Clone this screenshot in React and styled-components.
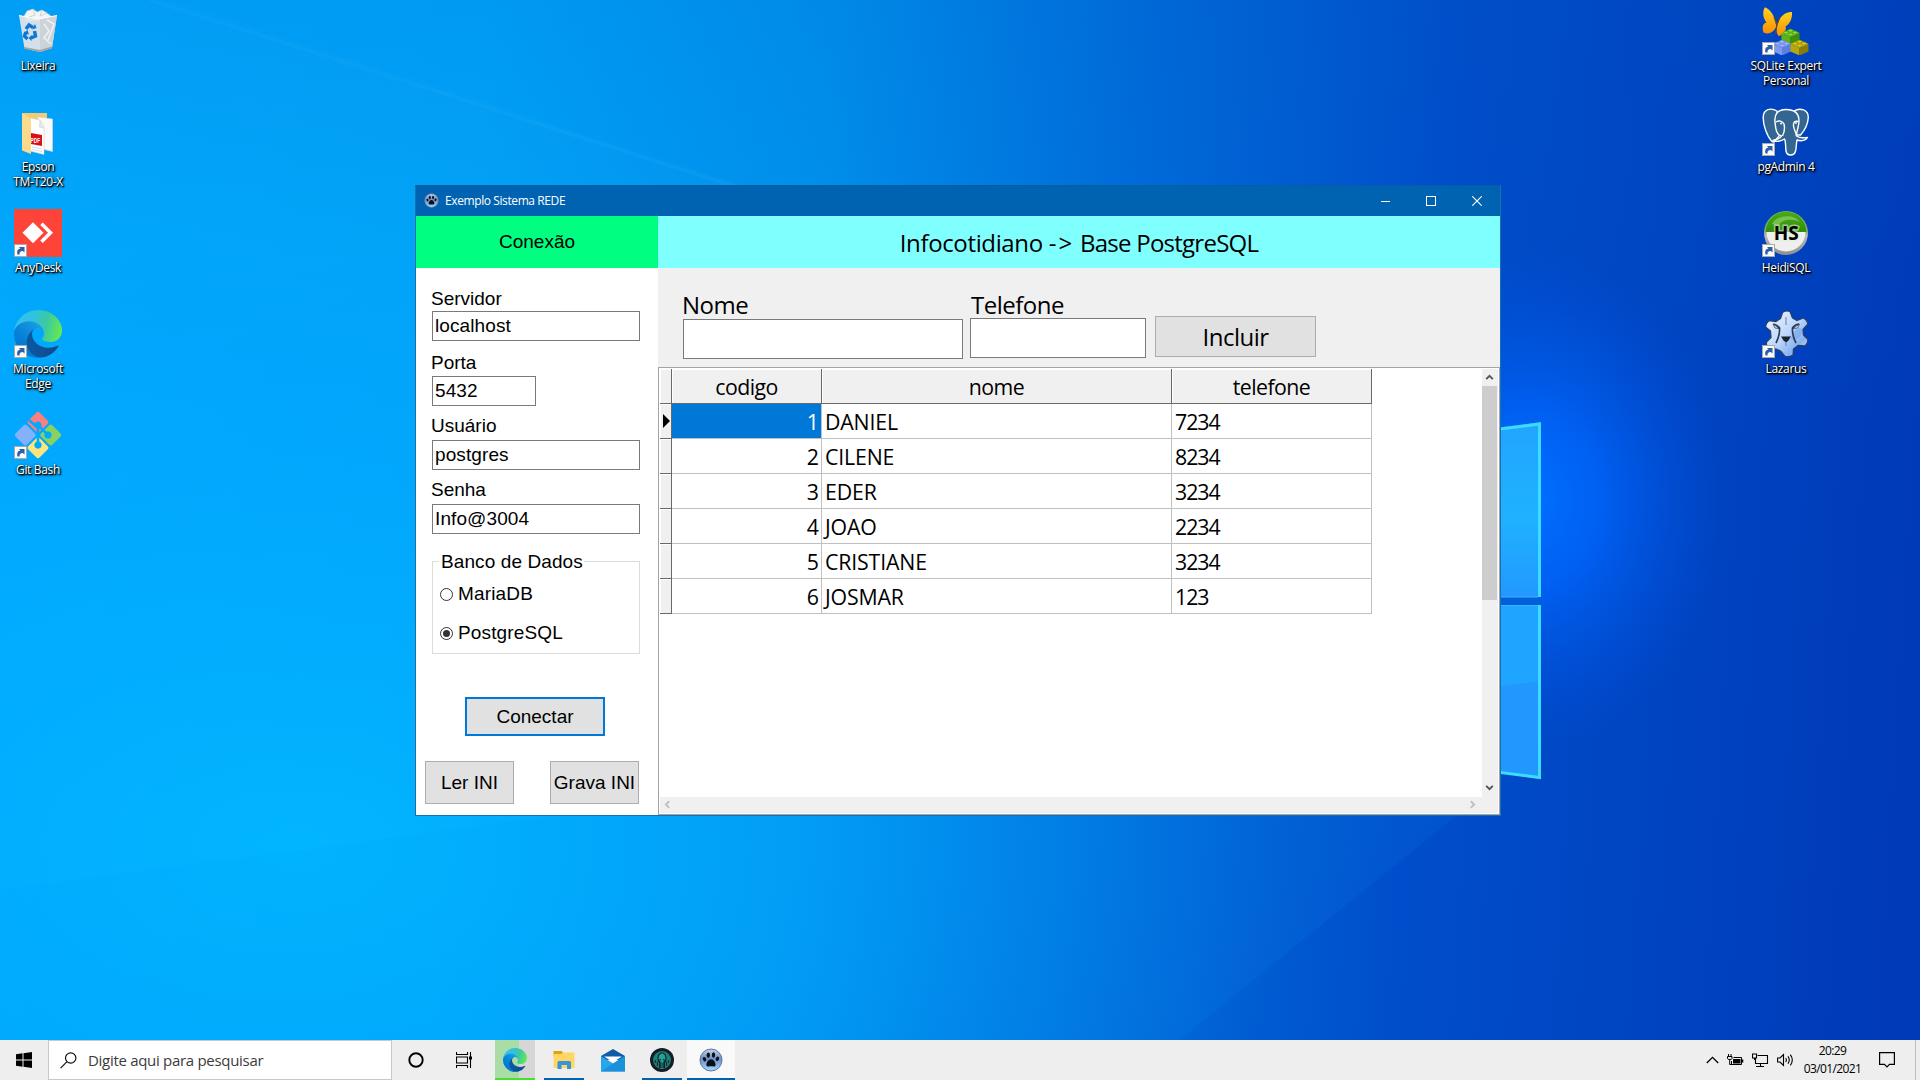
import React from "react";
import styled, { createGlobalStyle } from "styled-components";

const SEGOE = '"Open Sans", "Noto Sans", sans-serif';
const ARIAL = '"Liberation Sans", Arial, sans-serif';

const GlobalStyle = createGlobalStyle`
  *, *::before, *::after { box-sizing: border-box; }
  body { margin: 0; overflow: hidden; }
  svg { display: block; flex: none; }
`;

/* ---------- desktop ---------- */

const Screen = styled.div`
  position: relative;
  display: flex;
  flex-direction: column;
  width: 1920px;
  height: 1080px;
  overflow: hidden;
  font-family: ${SEGOE};
  background: #0078e0;
`;

const Wallpaper = styled.svg`
  position: absolute;
  left: 0;
  top: 0;
`;

const Desktop = styled.main`
  position: relative;
  flex: 1;
  display: flex;
  justify-content: space-between;
  padding-right: 96px;
`;

const IconColumn = styled.div`
  display: flex;
  flex-direction: column;
  width: 76px;
`;

const Shortcut = styled.div`
  height: 101px;
  padding-top: 7px;
  display: flex;
  flex-direction: column;
  align-items: center;
  gap: 3px;
`;

const ShortcutLabel = styled.span`
  color: #fff;
  font-size: 12px;
  line-height: 15px;
  letter-spacing: -0.35px;
  text-align: center;
  white-space: pre;
  text-shadow: 1px 1px 1px #000, 1px 1px 2px #000, 0 1px 3px rgba(0, 0, 0, 0.9);
`;

/* ---------- application window ---------- */

const Window = styled.section`
  position: absolute;
  left: 415px;
  top: 185px;
  width: 1086px;
  height: 631px;
  border: 1px solid #1c6fae;
  border-top-color: #0a5ca0;
  display: flex;
  flex-direction: column;
  background: #fff;
  color: #000;
`;

const TitleBar = styled.header`
  flex: none;
  height: 30px;
  display: flex;
  align-items: center;
  padding: 0 0 1px 8px;
  background: #0063b1;
  color: #fff;
`;

const TitleText = styled.h1`
  flex: 1;
  margin: 0 0 0 6px;
  font-size: 12px;
  font-weight: 400;
  line-height: 30px;
  height: 29px;
  letter-spacing: -0.4px;
`;

const CaptionButton = styled.span`
  width: 46px;
  height: 29px;
  display: flex;
  align-items: center;
  justify-content: center;
`;

const Body = styled.div`
  flex: 1;
  display: flex;
  min-height: 0;
`;

const ConnectionPanel = styled.aside`
  width: 242px;
  flex: none;
  display: flex;
  flex-direction: column;
  font-family: ${ARIAL};
  font-size: 19px;
  line-height: 22px;
`;

const ConnectionTitle = styled.div`
  height: 52px;
  line-height: 51px;
  text-align: center;
  background: #00ff80;
`;

const ConnectionForm = styled.div`
  flex: 1;
  display: flex;
  flex-direction: column;
  padding: 20px 18px 0 16px;
`;

const FieldLabel = styled.label`
  height: ${(p) => p.$h}px;
  margin-left: -1px;
`;

const TextField = styled.div`
  width: ${(p) => p.$w}px;
  height: 30px;
  margin-bottom: ${(p) => p.$after}px;
  padding-left: 2px;
  border: 1px solid #7a7a7a;
  background: #fff;
  line-height: 27px;
  letter-spacing: 0.1px;
`;

const Group = styled.div`
  height: 93px;
  width: 208px;
  margin-top: 27px;
  border: 1px solid #dcdcdc;
  display: flex;
  flex-direction: column;
  align-items: flex-start;
`;

const GroupCaption = styled.span`
  flex: none;
  height: 22px;
  margin: -12px 0 11px 6px;
  padding: 1px 1px 0 2px;
  background: #fff;
  letter-spacing: 0.1px;
`;

const Option = styled.div`
  height: 22px;
  margin: 0 0 17px 7px;
  display: flex;
  align-items: center;
  gap: 5px;
  letter-spacing: 0.15px;
`;

const Radio = styled.span`
  width: 13px;
  height: 13px;
  padding: 2px;
  border: 1px solid #333;
  border-radius: 50%;
  background: ${(p) => (p.$on ? "#333" : "#fff")};
  background-clip: content-box;
`;

const Button = styled.button`
  width: ${(p) => p.$w}px;
  height: ${(p) => p.$h}px;
  flex: none;
  padding: 0;
  border: ${(p) => (p.$focused ? "2px solid #0078d7" : "1px solid #adadad")};
  background: #e1e1e1;
  color: #000;
  font: inherit;
  white-space: nowrap;
  letter-spacing: inherit;
`;

const ConnectRow = styled.div`
  padding: 43px 0 25px 33px;
  display: flex;
`;

const IniRow = styled.div`
  display: flex;
  gap: 36px;
  margin-left: -7px;
`;

const Content = styled.div`
  flex: 1;
  display: flex;
  flex-direction: column;
  min-width: 0;
`;

const ContentTitle = styled.div`
  height: 52px;
  flex: none;
  background: #80ffff;
  text-align: center;
  font-size: 24px;
  line-height: 53px;
  letter-spacing: -0.36px;
`;

const TitlePart = styled.span`
  letter-spacing: ${(p) => p.$ls}px;
`;

const InsertBar = styled.div`
  height: 99px;
  flex: none;
  display: flex;
  align-items: flex-start;
  padding: 20px 0 0 25px;
  background: #f0f0f0;
  font-size: 24px;
  letter-spacing: -0.5px;
`;

const InsertField = styled.div`
  width: ${(p) => p.$w}px;
  margin-right: ${(p) => p.$gap}px;
  display: flex;
  flex-direction: column;
`;

const InsertLabel = styled.label`
  height: ${(p) => p.$h}px;
  line-height: 34px;
  margin-left: ${(p) => p.$shift}px;
`;

const InsertInput = styled.div`
  height: 40px;
  border: 1px solid #7a7a7a;
  background: #fff;
`;

const InsertAction = styled.div`
  padding-top: 28px;
`;

const GridFrame = styled.div`
  flex: 1;
  display: flex;
  flex-direction: column;
  border: 1px solid #a3a3a8;
  padding: 1px;
  min-height: 0;
`;

const GridArea = styled.div`
  flex: 1;
  display: flex;
  min-height: 0;
`;

const Table = styled.div`
  flex: 1;
  display: flex;
  flex-direction: column;
  font-size: 21.3px;
  line-height: 36px;
`;

const Row = styled.div`
  display: grid;
  grid-template-columns: 12px 150px 350px 200px;
  grid-template-rows: 35px;
  height: 35px;
`;

const Indicator = styled.span`
  display: flex;
  align-items: center;
  padding: 0 0 1px 2px;
  background: #f0f0f0;
  box-shadow: inset 1px 1px 0 #fff;
  border-right: 1px solid #696969;
  border-bottom: 1px solid #696969;
`;

const HeaderCell = styled.span`
  height: 35px;
  background: #f0f0f0;
  box-shadow: inset 1px 1px 0 #fff;
  border-right: 1px solid #696969;
  border-bottom: 1px solid #696969;
  text-align: center;
  letter-spacing: -0.55px;
`;

const Cell = styled.span`
  height: 35px;
  padding: 0 ${(p) => (p.$right ? 2 : 0)}px 0 ${(p) => (p.$right ? 0 : 3)}px;
  border-right: 1px solid #c0c0c0;
  border-bottom: 1px solid #c0c0c0;
  text-align: ${(p) => (p.$right ? "right" : "left")};
  background: ${(p) => (p.$selected ? "#0078d7" : "#fff")};
  color: ${(p) => (p.$selected ? "#fff" : "#000")};
  letter-spacing: ${(p) => (p.$digits ? -1 : p.$right ? 0 : -0.15)}px;
`;

const VerticalBar = styled.div`
  width: 16px;
  display: flex;
  flex-direction: column;
  background: #f0f0f0;
`;

const ScrollArrow = styled.span`
  width: 15px;
  height: ${(p) => p.$h}px;
  display: flex;
  align-items: center;
  justify-content: center;
`;

const Thumb = styled.span`
  width: 15px;
  height: 214px;
  background: #cdcdcd;
`;

const Track = styled.span`
  flex: 1;
`;

const HorizontalBar = styled.div`
  height: 16px;
  flex: none;
  display: flex;
  padding-right: 18px;
  justify-content: space-between;
  background: #f0f0f0;
`;

/* ---------- taskbar ---------- */

const Taskbar = styled.footer`
  position: relative;
  flex: none;
  height: 40px;
  display: flex;
  background: #eee;
  color: #000;
`;

const TaskButton = styled.span`
  width: ${(p) => p.$w || 48}px;
  margin-left: ${(p) => p.$gap || 0}px;
  height: 40px;
  display: flex;
  align-items: center;
  justify-content: center;
  background: ${(p) => p.$bg || "transparent"};
  border-bottom: 2px solid ${(p) => p.$line || "transparent"};
  border-top: 2px solid transparent;
`;

const SearchBox = styled.div`
  width: 344px;
  height: 40px;
  padding-left: 11px;
  display: flex;
  align-items: center;
  gap: 11px;
  border: 1px solid #c8c8c8;
  background: #fff;
  color: #3b3b3b;
  font-size: 15px;
  letter-spacing: -0.3px;
`;

const Spacer = styled.span`
  flex: 1;
`;

const Tray = styled.div`
  display: flex;
  align-items: center;
  gap: 8px;
  padding-right: 20px;
`;

const Clock = styled.time`
  width: 61px;
  margin-right: 8px;
  display: flex;
  flex-direction: column;
  font-size: 12px;
  line-height: 18px;
  letter-spacing: -0.6px;
  text-align: center;
`;

const ShowDesktop = styled.span`
  width: 5px;
  border-left: 1px solid #bcbcbc;
`;

/* ---------- drawings ---------- */

function WallpaperArt() {
  return (
    <Wallpaper width="1920" height="1080" viewBox="0 0 1920 1080">
      <defs>
        <linearGradient id="wBase" gradientUnits="userSpaceOnUse" x1="0" y1="440" x2="1920" y2="560">
          <stop offset="0" stopColor="#00acff" />
          <stop offset="0.24" stopColor="#00a8fb" />
          <stop offset="0.42" stopColor="#0094ee" />
          <stop offset="0.58" stopColor="#006edb" />
          <stop offset="0.74" stopColor="#004ecb" />
          <stop offset="1" stopColor="#003ab8" />
        </linearGradient>
        <radialGradient id="wLow" gradientUnits="userSpaceOnUse" cx="300" cy="850" r="1000" gradientTransform="translate(0 340) scale(1 .6)">
          <stop offset="0" stopColor="#00b8ff" stopOpacity="0.85" />
          <stop offset="0.5" stopColor="#00aaff" stopOpacity="0.5" />
          <stop offset="1" stopColor="#0090f8" stopOpacity="0" />
        </radialGradient>
        <radialGradient id="wGlow" gradientUnits="userSpaceOnUse" cx="1530" cy="500" r="250" gradientTransform="translate(306 0) scale(.8 1)">
          <stop offset="0" stopColor="#0070ff" />
          <stop offset="0.35" stopColor="#0064fa" stopOpacity="0.85" />
          <stop offset="1" stopColor="#0050dc" stopOpacity="0" />
        </radialGradient>
        <linearGradient id="wTop" x1="0" y1="0" x2="0" y2="1">
          <stop offset="0" stopColor="#0050c0" stopOpacity="0.16" />
          <stop offset="1" stopColor="#0050c0" stopOpacity="0" />
        </linearGradient>
        <linearGradient id="wBeam" gradientUnits="userSpaceOnUse" x1="100" y1="0" x2="1500" y2="460">
          <stop offset="0" stopColor="#3bc0ff" stopOpacity="0.05" />
          <stop offset="1" stopColor="#18a0ff" stopOpacity="0.18" />
        </linearGradient>
        <linearGradient id="wPane" x1="0" y1="0" x2="0" y2="1">
          <stop offset="0" stopColor="#22a4ff" />
          <stop offset="0.55" stopColor="#1fb2ff" />
          <stop offset="1" stopColor="#2298ff" />
        </linearGradient>
      </defs>
      <rect width="1920" height="1080" fill="url(#wBase)" />
      <rect width="1920" height="420" fill="url(#wTop)" />
      <rect width="1920" height="1080" fill="url(#wLow)" />
      <path d="M90 0 H170 L1500 430 V780 L1130 1080 H0 V0 Z" fill="url(#wBeam)" opacity=".45" />
      <path d="M150 0 L1500 430" stroke="#35b4ff" strokeOpacity=".14" strokeWidth="4" />
      <path d="M0 890 L1500 690 V790 L960 1080 H0 Z" fill="#0076dc" opacity=".04" />
      <ellipse cx="1530" cy="500" rx="200" ry="250" fill="url(#wGlow)" />
      <path d="M1380 443 L1541 422 V597 H1380 Z" fill="url(#wPane)" />
      <path d="M1380 605 H1541 V779 L1380 756 Z" fill="#2298ff" />
      <path d="M1380 605 H1541 V681 L1380 702 Z" fill="#1fa4ff" />
      <path d="M1380 597 H1541 V605 H1380 Z" fill="#0060da" />
      <path d="M1380 444 L1539.500 424 V597 M1539.500 605 V777.500 L1380 757" fill="none" stroke="#3adcff" strokeWidth="3" />
      <path d="M1380 597 H1538 M1380 605.500 H1538" stroke="#3cb0ff" strokeWidth="1.200" />
    </Wallpaper>
  );
}

function Art({ size = 48, link, children }) {
  return (
    <svg width={size} height={size} viewBox="0 0 48 48">
      {children}
      {link && (
        <g>
          <rect x=".5" y="35.500" width="12" height="12" fill="#fbfbfb" stroke="#a9a9a9" />
          <path d="M3.500 45.500 C2.500 41.500 4 39.700 6.500 39.700 L5 38 H10.500 V43.500 L8.800 42 C6.300 42 5.200 43.200 5.600 45.500 Z" fill="#2c5fa8" />
        </g>
      )}
    </svg>
  );
}

function RecycleBin() {
  return (
    <Art>
      <path d="M10 9 L13 4 L19 2 L23 5 L28 3 L33 6 L37 9 L34 14 H12 Z" fill="#f2f4f6" stroke="#c3cad0" strokeWidth=".6" />
      <path d="M19 2 L21 8 L15 10 M28 3 L26 9 L33 6" fill="none" stroke="#c5ccd2" strokeWidth=".8" />
      <path d="M5 8.500 L24 12 L43 8.500 L38 41 L26 45 L10.500 41.500 Z" fill="#e1e5e8" fillOpacity=".93" />
      <path d="M26 12 L43 8.500 L38 41 L26 45 Z" fill="#cbd1d6" fillOpacity=".85" />
      <path d="M30 17 L35 24 L30 31 L37 37 M33 13 L40 17 L34 33" fill="none" stroke="#eef1f3" strokeWidth="1.500" />
      <path d="M10 40 L26 43 L38 39.500 L38 41 L26 45 L10.500 41.500 Z" fill="#a99f9c" />
      <path d="M5 8.500 L24 12 L43 8.500" fill="none" stroke="#fff" strokeWidth="1" />
      <g fill="none" stroke="#0f77d0" strokeWidth="3.400">
        <path d="M12 22 L15 18 L19 20.500" />
        <path d="M20.500 24 L21.500 29 L17 31" />
        <path d="M13.500 32 L10.500 29 L12 25" />
      </g>
      <path d="M18 22.500 L22.500 21 L21 17 Z M18 28 L17.500 34 L14.500 31 Z M9 26.500 L13.500 23 L15 27.500 Z" fill="#0f77d0" />
    </Art>
  );
}

function PdfFolder() {
  return (
    <Art>
      <path d="M8 5 H33 V40 H8 Z" fill="#f2cc74" />
      <path d="M24 9 L38.500 11 V43.500 L24 40 Z" fill="#fafafa" stroke="#d6d6d6" strokeWidth=".6" />
      <path d="M16 10 L26 12 L30 18 V46.500 L16 43 Z" fill="#fff" stroke="#cfcfcf" strokeWidth=".6" />
      <path d="M26 12 L25.500 19 L30 20" fill="#e6e6e6" stroke="#c6c6c6" strokeWidth=".5" />
      <path d="M17 25 L28 27 V38 L17 36 Z" fill="#d80f16" />
      <text x="16.600" y="34.500" fontFamily="Liberation Sans, sans-serif" fontWeight="700" fontSize="6.500" textLength="9.500" lengthAdjust="spacingAndGlyphs" fill="#fff">PDF</text>
      <path d="M18 39 L28 41 M18 41.500 L28 43.500" stroke="#c3d5ea" strokeWidth=".8" />
      <path d="M8 5 L17 10.500 V46 L8 42.500 Z" fill="#fbdb8b" />
    </Art>
  );
}

function AnyDesk() {
  return (
    <Art link>
      <rect width="48" height="48" fill="#fe4438" />
      <path d="M8.500 23.800 L19 13.300 L29.500 23.800 L19 34.300 Z" fill="#fff" />
      <path d="M27.500 14.800 L36.500 23.800 L27.500 32.800" fill="none" stroke="#fff" strokeWidth="3.600" />
    </Art>
  );
}

function EdgeShape({ id }) {
  return (
    <g transform="scale(.1875) translate(-4.630 -4.920)">
      <defs>
        <linearGradient id={id + "a"} gradientUnits="userSpaceOnUse" x1="63" y1="177" x2="241" y2="177">
          <stop offset="0" stopColor="#0c59a4" />
          <stop offset="1" stopColor="#114a8b" />
        </linearGradient>
        <linearGradient id={id + "b"} gradientUnits="userSpaceOnUse" x1="157" y1="102" x2="46" y2="223">
          <stop offset="0" stopColor="#1b9de2" />
          <stop offset=".16" stopColor="#1595df" />
          <stop offset=".67" stopColor="#0680d7" />
          <stop offset="1" stopColor="#0078d4" />
        </linearGradient>
        <linearGradient id={id + "c"} gradientUnits="userSpaceOnUse" x1="10" y1="70" x2="255" y2="130">
          <stop offset="0" stopColor="#35c1f1" />
          <stop offset=".35" stopColor="#2fc2df" />
          <stop offset=".65" stopColor="#3cc9a0" />
          <stop offset="1" stopColor="#66eb4e" />
        </linearGradient>
      </defs>
      <path fill={`url(#${id}a)`} d="M235.680 195.460a93.730 93.730 0 0 1-10.540 4.710 101.870 101.870 0 0 1-35.900 6.460c-47.320 0-88.540-32.550-88.540-74.320A31.480 31.480 0 0 1 117.130 105c-42.800 1.800-53.800 46.400-53.800 72.530 0 73.880 68.090 81.370 82.760 81.370 7.910 0 19.840-2.300 27-4.560l1.310-.44a128.340 128.340 0 0 0 66.600-52.800 4 4 0 0 0-5.320-5.640Z" />
      <path fill={`url(#${id}b)`} d="M110.340 246.340A79.200 79.200 0 0 1 87.600 225a80.720 80.720 0 0 1 29.530-120c3.120-1.470 8.450-4.130 15.540-4a32.350 32.350 0 0 1 25.690 13 31.880 31.880 0 0 1 6.360 18.660c0-.21 24.460-79.600-80-79.600-43.900 0-80 41.660-80 78.210a130.150 130.150 0 0 0 12.110 56 128 128 0 0 0 156.380 67.110 75.550 75.550 0 0 1-62.780-8Z" />
      <path fill={`url(#${id}c)`} d="M156.940 153.780c-.81 1.050-3.300 2.500-3.300 5.660 0 2.610 1.700 5.120 4.720 7.230 14.380 10 41.490 8.680 41.560 8.680a59.560 59.560 0 0 0 30.270-8.350A61.380 61.380 0 0 0 260.620 114c.26-22.410-8-37.310-11.340-43.910C228.090 28.760 182.350 4.920 132.610 4.920a128 128 0 0 0-128 126.200c.48-36.540 36.800-66.050 80-66.050 3.500 0 23.460.34 42 10.070 16.340 8.580 24.900 18.940 30.850 29.210 6.180 10.670 7.280 24.150 7.280 29.520s-2.740 13.330-7.840 19.910Z" />
    </g>
  );
}

function GitBash() {
  return (
    <Art link>
      <g transform="rotate(45 24 24)">
        <rect x="7" y="7" width="16" height="16" rx="2.500" fill="#fa7f81" />
        <rect x="25" y="7" width="16" height="16" rx="2.500" fill="#8bd15e" />
        <rect x="7" y="25" width="16" height="16" rx="2.500" fill="#83b1fc" />
        <rect x="25" y="25" width="16" height="16" rx="2.500" fill="#fde47c" />
      </g>
      <g stroke="#00abfe" fill="#00abfe">
        <path d="M15 9 L24 17 M24 14 V34 M25 15 L34 24" strokeWidth="2.600" />
        <circle cx="24" cy="14" r="3" />
        <circle cx="34" cy="24" r="3.200" />
        <circle cx="24" cy="34" r="3.200" />
      </g>
    </Art>
  );
}

function Brick({ x, y, top, left, right }) {
  return (
    <g transform={`translate(${x} ${y})`}>
      <path d="M0 4 L9 0 L18 4 L9 8 Z" fill={top} />
      <path d="M0 4 L9 8 V15.500 L0 11.500 Z" fill={left} />
      <path d="M18 4 L9 8 V15.500 L18 11.500 Z" fill={right} />
      <g fill={top} stroke={right} strokeWidth=".7">
        <ellipse cx="9" cy="1.700" rx="2.500" ry="1.500" />
        <ellipse cx="4.500" cy="3.600" rx="2.500" ry="1.500" />
        <ellipse cx="13.500" cy="3.600" rx="2.500" ry="1.500" />
        <ellipse cx="9" cy="5.500" rx="2.500" ry="1.500" />
      </g>
    </g>
  );
}

function SqliteExpert() {
  return (
    <Art link>
      <defs>
        <linearGradient id="wing" x1="0" y1="0" x2="0" y2="1">
          <stop offset="0" stopColor="#ffd21c" />
          <stop offset="1" stopColor="#fa8f06" />
        </linearGradient>
      </defs>
      <path d="M14 18 C13 9 8 2 3 .3 C.5 3 .5 11 4.500 15.500 C.5 16 0 21 1.500 25.500 C7 28 12 25 14 20 Z" fill="url(#wing)" />
      <path d="M15.500 17 C18 9 24 4.500 30 5 C30.500 11 28 17 23.500 19.500 C25 24 21 28 16.500 29 C14 26 14 21 15.500 17 Z" fill="url(#wing)" />
      <path d="M12 10 L15 18 L13.500 27 M15 18 L18 10" fill="none" stroke="#6b4a15" strokeWidth="1.100" />
      <Brick x="19.500" y="22" top="#8ddb2c" left="#5cb312" right="#3f8f0a" />
      <Brick x="11" y="33" top="#9db4fb" left="#7c98f2" right="#5f7ee0" />
      <Brick x="28.500" y="33" top="#d9cc1c" left="#b7a70c" right="#8c7c05" />
    </Art>
  );
}

function PgAdmin() {
  return (
    <Art link>
      <g fill="#336791" stroke="#fff" strokeWidth="1.400" strokeLinejoin="round">
        <path d="M15 3 C9 -.5 1.500 1 1.200 9 C1 17 5 28 9.500 33 C11.500 35 13.500 34 14.500 31 L18 27 Z" />
        <path d="M32 3 C38 -.5 46.500 1.500 46.300 9.500 C46 15 43 22 38.500 27 L33 27 Z" />
        <path d="M13 14 C12 6 16 1.500 24 1.500 C32 1.500 37 5 37 13 C37 19 34.500 22 34.500 28 C39 31 43 29.500 45.500 29.500 C44 32.500 39 33.500 35 32 C34 37 34.500 40 33.500 43 C32.500 48 25 48.500 24 43 C23.400 39 24 34 22.500 31 C19 33 15.500 34.500 11 32.500 C15 31.500 18.500 30.500 19.500 28 C14 27 13.600 20 13 14 Z" />
        <path d="M14 14 C17 12 20.500 13 22 16 C23 20 22.500 24 20.500 28" fill="none" />
        <path d="M36.500 13.500 C33 12.500 31 14 31.500 18 C32 22 34 24 34.500 28" fill="none" />
      </g>
      <circle cx="19" cy="15.500" r="1" fill="#fff" />
      <circle cx="34" cy="15" r=".9" fill="#fff" />
    </Art>
  );
}

function HeidiSql() {
  return (
    <Art link>
      <defs>
        <linearGradient id="hsTop" x1="0" y1="0" x2="0" y2="1">
          <stop offset="0" stopColor="#4ba81c" />
          <stop offset="1" stopColor="#2f9108" />
        </linearGradient>
        <linearGradient id="hsRim" x1="0" y1="0" x2="0" y2="1">
          <stop offset="0" stopColor="#6fb84a" />
          <stop offset=".45" stopColor="#7fa572" />
          <stop offset=".55" stopColor="#b9bbb8" />
          <stop offset="1" stopColor="#8d908d" />
        </linearGradient>
      </defs>
      <circle cx="24" cy="24" r="22" fill="url(#hsRim)" />
      <path d="M3.800 23 A20.200 20.200 0 0 1 44.200 23 Z" fill="url(#hsTop)" />
      <path d="M10 15 C14 6 32 4 38 13 C30 9 20 10 16 17 Z" fill="#9ad96f" opacity=".6" />
      <path d="M4.500 23 A19.500 19.500 0 0 0 43.500 23 Z" fill="#eeefee" />
      <text x="24.300" y="31" textAnchor="middle" fontFamily="Open Sans, sans-serif" fontWeight="700" fontSize="19" fill="#000" stroke="#dff0d6" strokeWidth="3" strokeOpacity=".6" paintOrder="stroke">HS</text>
    </Art>
  );
}

function LazarusGear() {
  return (
    <Art link>
      <defs>
        <linearGradient id="lz" x1="0" y1="0" x2="1" y2="1">
          <stop offset="0" stopColor="#f3f8ff" />
          <stop offset=".5" stopColor="#bcd7fb" />
          <stop offset=".75" stopColor="#86b3f0" />
          <stop offset="1" stopColor="#dcebff" />
        </linearGradient>
      </defs>
      <path d="M20.500 2.500 Q24 0 28 1.500 L30.500 8 L35 10.500 L41.500 8 Q45 10 46 14 L41 19.500 L41.500 25 L46 29.500 Q46 33 43 36 L36 35.500 L31.500 39 L31 45 Q27 47.500 23 46.500 L18.500 41 L14 39 L6 39 Q4 36 4.500 32 L9 27.500 L8.500 21 L3.500 17 Q4 13 7 10.500 L14 11.500 L18.500 8.500 Z" fill="url(#lz)" stroke="#27406b" strokeWidth="1.300" strokeLinejoin="round" />
      <path d="M29 30 C36 30 40 26 40 20 C38 15 33 20 30 24 Z" fill="#6fa3ea" opacity=".55" />
      <path d="M11.500 14 C14 14.500 16 15.500 17.500 18 C18 24 17 27 14 33 M37 14 C34 14.500 32 15.500 30.500 18 C30 24 31 27 34 33" fill="none" stroke="#2b3b57" strokeWidth="1.700" />
      <path d="M11 14 L17 18.500 L13 18 Z M37.500 14 L31 18.500 L35.500 18 Z" fill="#fff" stroke="#2b3b57" strokeWidth=".8" />
      <path d="M19 26.500 H29 L26.500 30.500 L24 32.500 L21.500 30.500 Z" fill="#1a2231" />
      <path d="M24 7 V15 M24 32 V36" stroke="#6a7fa3" strokeWidth="1" />
    </Art>
  );
}

function Paw({ size, id }) {
  return (
    <svg width={size} height={size} viewBox="0 0 24 24">
      <defs>
        <linearGradient id={id} x1="0" y1="0" x2="0" y2="1">
          <stop offset="0" stopColor="#c6d2e6" />
          <stop offset=".45" stopColor="#6f90c6" />
          <stop offset="1" stopColor="#9fdcff" />
        </linearGradient>
      </defs>
      <circle cx="12" cy="12" r="11" fill={`url(#${id})`} stroke="#5b76a3" strokeWidth="1" />
      <path d="M12 11.200 C14.300 11.200 16.800 14.300 16.600 16.900 C16.400 19.200 14 18.300 12 18.300 C10 18.300 7.600 19.200 7.400 16.900 C7.200 14.300 9.700 11.200 12 11.200 Z" fill="#0b0f1a" />
      <ellipse cx="9.300" cy="7.200" rx="1.700" ry="2.700" fill="#0b0f1a" />
      <ellipse cx="14.500" cy="7" rx="1.700" ry="2.700" fill="#0b0f1a" />
      <ellipse cx="5.600" cy="11.200" rx="1.600" ry="2.300" transform="rotate(-25 5.600 11.200)" fill="#0b0f1a" />
      <ellipse cx="18.400" cy="10.800" rx="1.600" ry="2.300" transform="rotate(25 18.400 10.800)" fill="#0b0f1a" />
    </svg>
  );
}

function Chevron({ dir, color }) {
  const turn = { up: 0, right: 90, down: 180, left: 270 }[dir];
  return (
    <svg width="9" height="9" viewBox="0 0 9 9">
      <path d="M1.200 6.200 L4.500 2.900 L7.800 6.200" fill="none" stroke={color} strokeWidth="1.900" transform={`rotate(${turn} 4.500 4.500)`} />
    </svg>
  );
}

function GitKraken() {
  return (
    <svg width="24" height="24" viewBox="0 0 24 24">
      <circle cx="12" cy="12" r="12" fill="#161b2a" />
      <circle cx="12" cy="12" r="9" fill="#1c8375" />
      <path d="M12 4.500 C15 4.500 16.500 7 16.500 10 C17 12 15.500 13.500 15 14.500 V20 H9 V14.500 C8.500 13.500 7 12 7.500 10 C7.500 7 9 4.500 12 4.500 Z" fill="#161b2a" />
      <path d="M12 5.500 C14.300 5.500 15.500 8 15.500 10.500 C15.500 12 13.800 13 13.300 14 V20.500 H10.700 V14 C10.200 13 8.500 12 8.500 10.500 C8.500 8 9.700 5.500 12 5.500 Z" fill="#22a392" />
      <path d="M7.300 13.500 V18 M16.700 13.500 V18 M5.300 12 V15 M18.700 12 V15 M12 14.500 V20" stroke="#161b2a" strokeWidth="1" />
      <circle cx="10.200" cy="11.700" r=".8" fill="#161b2a" />
      <circle cx="13.800" cy="11.700" r=".8" fill="#161b2a" />
    </svg>
  );
}

/* ---------- data ---------- */

const leftShortcuts = [
  ["Lixeira", <RecycleBin />],
  ["Epson\nTM-T20-X", <PdfFolder />],
  ["AnyDesk", <AnyDesk />],
  ["Microsoft\nEdge", <Art link><EdgeShape id="edgeDesk" /></Art>],
  ["Git Bash", <GitBash />],
];

const rightShortcuts = [
  ["SQLite Expert\nPersonal", <SqliteExpert />],
  ["pgAdmin 4", <PgAdmin />],
  ["HeidiSQL", <HeidiSql />],
  ["Lazarus", <LazarusGear />],
];

const fields = [
  { label: "Servidor", value: "localhost", w: 208, h: 23, after: 11 },
  { label: "Porta", value: "5432", w: 104, h: 24, after: 9 },
  { label: "Usuário", value: "postgres", w: 208, h: 25, after: 9 },
  { label: "Senha", value: "Info@3004", w: 208, h: 25, after: 0 },
];

const records = [
  [1, "DANIEL", "7234"],
  [2, "CILENE", "8234"],
  [3, "EDER", "3234"],
  [4, "JOAO", "2234"],
  [5, "CRISTIANE", "3234"],
  [6, "JOSMAR", "123"],
];

function Shortcuts({ items }) {
  return (
    <IconColumn>
      {items.map(([name, icon]) => (
        <Shortcut key={name}>
          {icon}
          <ShortcutLabel>{name}</ShortcutLabel>
        </Shortcut>
      ))}
    </IconColumn>
  );
}

function ConnectionSide() {
  return (
    <ConnectionPanel>
      <ConnectionTitle>Conexão</ConnectionTitle>
      <ConnectionForm>
        {fields.map((f) => (
          <React.Fragment key={f.label}>
            <FieldLabel $h={f.h}>{f.label}</FieldLabel>
            <TextField $w={f.w} $after={f.after}>{f.value}</TextField>
          </React.Fragment>
        ))}
        <Group>
          <GroupCaption>Banco de Dados</GroupCaption>
          <Option><Radio />MariaDB</Option>
          <Option><Radio $on />PostgreSQL</Option>
        </Group>
        <ConnectRow>
          <Button $w={140} $h={39} $focused>Conectar</Button>
        </ConnectRow>
        <IniRow>
          <Button $w={89} $h={43}>Ler INI</Button>
          <Button $w={89} $h={43}>Grava INI</Button>
        </IniRow>
      </ConnectionForm>
    </ConnectionPanel>
  );
}

function RecordGrid() {
  return (
    <GridFrame>
      <GridArea>
        <Table>
          <Row>
            <Indicator />
            <HeaderCell>codigo</HeaderCell>
            <HeaderCell>nome</HeaderCell>
            <HeaderCell>telefone</HeaderCell>
          </Row>
          {records.map(([id, name, phone], i) => (
            <Row key={id}>
              <Indicator>
                {i === 0 && (
                  <svg width="8" height="14" viewBox="0 0 8 14">
                    <path d="M1 0 L8 7 L1 14 Z" />
                  </svg>
                )}
              </Indicator>
              <Cell $right $selected={i === 0}>{id}</Cell>
              <Cell>{name}</Cell>
              <Cell $digits>{phone}</Cell>
            </Row>
          ))}
        </Table>
        <VerticalBar>
          <ScrollArrow $h={17}><Chevron dir="up" color="#555" /></ScrollArrow>
          <Thumb />
          <Track />
          <ScrollArrow $h={19}><Chevron dir="down" color="#555" /></ScrollArrow>
        </VerticalBar>
      </GridArea>
      <HorizontalBar>
        <ScrollArrow $h={15}><Chevron dir="left" color="#bfbfbf" /></ScrollArrow>
        <ScrollArrow $h={15}><Chevron dir="right" color="#bfbfbf" /></ScrollArrow>
      </HorizontalBar>
    </GridFrame>
  );
}

function AppWindow() {
  return (
    <Window>
      <TitleBar>
        <Paw size={15} id="pawTitle" />
        <TitleText>Exemplo Sistema REDE</TitleText>
        <CaptionButton>
          <svg width="10" height="10" viewBox="0 0 10 10"><path d="M1 5.500 H10" stroke="#fff" /></svg>
        </CaptionButton>
        <CaptionButton>
          <svg width="10" height="10" viewBox="0 0 10 10"><rect x=".5" y=".5" width="9" height="9" fill="none" stroke="#fff" /></svg>
        </CaptionButton>
        <CaptionButton>
          <svg width="10" height="10" viewBox="0 0 10 10"><path d="M.3 .3 L9.700 9.700 M9.700 .3 L.3 9.700" stroke="#fff" strokeWidth="1.100" /></svg>
        </CaptionButton>
      </TitleBar>
      <Body>
        <ConnectionSide />
        <Content>
          <ContentTitle>
            Infocotidiano <TitlePart $ls={2}>-&gt;</TitlePart> <TitlePart $ls={-0.75}>Base PostgreSQL</TitlePart>
          </ContentTitle>
          <InsertBar>
            <InsertField $w={280} $gap={7}>
              <InsertLabel $h={31} $shift={-1}>Nome</InsertLabel>
              <InsertInput />
            </InsertField>
            <InsertField $w={176} $gap={9}>
              <InsertLabel $h={30} $shift={1}>Telefone</InsertLabel>
              <InsertInput />
            </InsertField>
            <InsertAction>
              <Button $w={161} $h={41}>Incluir</Button>
            </InsertAction>
          </InsertBar>
          <RecordGrid />
        </Content>
      </Body>
    </Window>
  );
}

function Bar() {
  return (
    <Taskbar>
      <TaskButton>
        <svg width="16" height="16" viewBox="0 0 16 16">
          <path d="M0 2.300 L6.500 1.300 V7.500 H0 Z M7.500 1.200 L16 0 V7.500 H7.500 Z M0 8.500 H6.500 V14.700 L0 13.700 Z M7.500 8.500 H16 V16 L7.500 14.800 Z" />
        </svg>
      </TaskButton>
      <SearchBox>
        <svg width="17" height="17" viewBox="0 0 17 17">
          <circle cx="10.700" cy="6" r="5.200" fill="none" stroke="#111" strokeWidth="1.200" />
          <path d="M7 9.700 L.6 16.200" stroke="#111" strokeWidth="1.200" />
        </svg>
        Digite aqui para pesquisar
      </SearchBox>
      <TaskButton>
        <svg width="16" height="16" viewBox="0 0 16 16"><circle cx="8" cy="8" r="6.700" fill="none" stroke="#000" strokeWidth="1.900" /></svg>
      </TaskButton>
      <TaskButton>
        <svg width="17" height="16" viewBox="0 0 17 16">
          <path d="M.5 0 V2.500 H11.500 V0 M.5 16 V13.500 H11.500 V16 M.5 5 H11.500 V11 H.5 Z M14.500 0 V16" fill="none" stroke="#000" strokeWidth="1.100" />
          <rect x="13" y="4.500" width="3" height="3" />
        </svg>
      </TaskButton>
      <TaskButton $w={40} $gap={7} $bg="linear-gradient(90deg, #aadca6 60%, #d6d6d6 60%)" $line="#47e02c">
        <svg width="24" height="24" viewBox="0 0 48 48"><EdgeShape id="edgeBar" /></svg>
      </TaskButton>
      <TaskButton $w={40} $gap={9} $line="#0063b1">
        <svg width="22" height="20" viewBox="0 0 22 20">
          <path d="M.5 1 H8.500 L10 2.500 V6 H.5 Z" fill="#dfa10d" />
          <path d="M.5 4 H8.500 L10 2.500 H21.500 V18 H.5 Z" fill="#ffd564" />
          <path d="M4.500 19 V12.500 Q4.500 11 6 11 H16.500 Q18 11 18 12.500 V19 H14 V15 H8.500 V19 Z" fill="#3794dc" />
        </svg>
      </TaskButton>
      <TaskButton $w={40} $gap={9}>
        <svg width="24" height="24" viewBox="0 0 24 24">
          <path d="M0 8 L12 1 L24 8 V12 H0 Z" fill="#0f5ba8" />
          <path d="M0 8 L12 15.500 L24 8 V23.500 H0 Z" fill="#28a6ea" />
          <path d="M0 23.500 L24 8 V23.500 Z" fill="#1b91dc" />
          <path d="M3 8.500 H21 L12 14.300 Z" fill="#fff" />
        </svg>
      </TaskButton>
      <TaskButton $w={40} $gap={9} $line="#0063b1"><GitKraken /></TaskButton>
      <TaskButton $w={48} $gap={5} $bg="#f9f9f9" $line="#0063b1"><Paw size={24} id="pawBar" /></TaskButton>
      <Spacer />
      <Tray>
        <svg width="13" height="16" viewBox="0 0 13 16"><path d="M.8 11 L6.500 5.300 L12.200 11" fill="none" stroke="#000" strokeWidth="1.300" /></svg>
        <svg width="17" height="16" viewBox="0 0 17 16">
          <path d="M1.500 2 V4.500 M4 2 V4.500 M.5 4.500 H5 V6.500 Q5 7.500 2.700 7.500 Q.5 7.500 .5 6.500 Z M2.700 7.500 V12.500 H5" fill="none" stroke="#000" />
          <path d="M6.500 5.500 H14.500 V12.500 H4.500 V9" fill="none" stroke="#000" />
          <rect x="6" y="7" width="7.500" height="4.500" />
          <rect x="15" y="7.500" width="1.300" height="3" />
        </svg>
        <svg width="17" height="16" viewBox="0 0 17 16">
          <path d="M5.500 3.500 H15.500 V11.500 H3.500 V6.500 M8.500 11.500 V14.500 M4 14.500 H12 M.5 2 H4.500 V6 H.5 Z M2.500 6 V8" fill="none" stroke="#000" strokeWidth="1.100" />
        </svg>
        <svg width="17" height="16" viewBox="0 0 17 16">
          <path d="M.6 6 H3 L6.500 2.500 V13.500 L3 10 H.6 Z M8.700 6 Q10 8 8.700 10 M11 4.300 Q13.500 8 11 11.700 M13.300 2.600 Q17.300 8 13.300 13.400" fill="none" stroke="#000" strokeWidth="1.100" />
        </svg>
        <Clock>
          <span>20:29</span>
          <span>03/01/2021</span>
        </Clock>
        <svg width="16" height="18" viewBox="0 0 16 18"><path d="M.6 1.600 H15.400 V13.400 H10.500 L8 16 L5.500 13.400 H.6 Z" fill="none" stroke="#000" strokeWidth="1.200" /></svg>
      </Tray>
      <ShowDesktop />
    </Taskbar>
  );
}

export default function App() {
  return (
    <Screen>
      <GlobalStyle />
      <WallpaperArt />
      <Desktop>
        <Shortcuts items={leftShortcuts} />
        <Shortcuts items={rightShortcuts} />
        <AppWindow />
      </Desktop>
      <Bar />
    </Screen>
  );
}
